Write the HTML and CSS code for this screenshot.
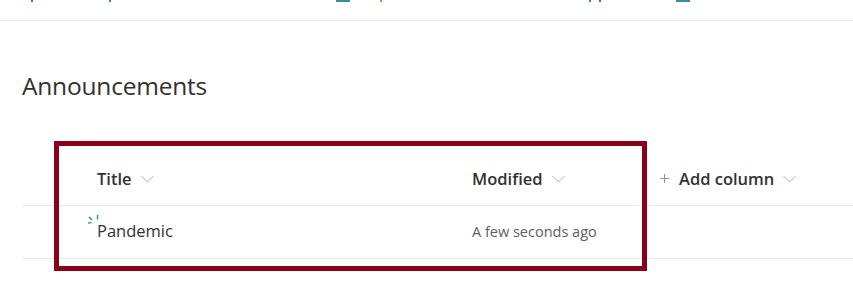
FILE: index.html
```html
<!DOCTYPE html>
<html>
<head>
  <meta charset="utf-8">
  <meta name="viewport" content="width=device-width, initial-scale=1">
  <title>Announcements</title>
  <link rel="stylesheet" href="styles.css">
</head>
<body>
  <div class="topbar">
    <div class="crumbs">
      <span class="mk m1"></span>
      <span class="mk m2"></span>
      <span class="mk bar m3"></span>
      <span class="mk m4"></span>
      <span class="mk m5"></span>
      <span class="mk m6"></span>
      <span class="mk bar m7"></span>
    </div>
  </div>

  <main class="page">
    <h1>Announcements</h1>

    <div class="list">
      <div class="row head">
        <div class="cell title">Title <svg class="chev" viewBox="0 0 14 8"><polyline points="1,1 7,7 13,1"/></svg></div>
        <div class="cell modified">Modified <svg class="chev" viewBox="0 0 14 8"><polyline points="1,1 7,7 13,1"/></svg></div>
        <div class="cell add">
          <svg class="plus" viewBox="0 0 10 10"><path d="M5 0V10M0 5H10"/></svg>
          Add column <svg class="chev" viewBox="0 0 14 8"><polyline points="1,1 7,7 13,1"/></svg>
        </div>
      </div>
      <div class="row item">
        <div class="cell title">
          <svg class="new" viewBox="0 0 11 11"><path d="M1 2L4 5M9.5 0V4.5M0 7.8H3.5"/></svg>
          Pandemic
        </div>
        <div class="cell modified">A few seconds ago</div>
      </div>
    </div>

    <div class="highlight"></div>
  </main>
</body>
</html>
```

FILE: styles.css
```css
body {
  margin: 0;
  background: #fff;
  color: #323130;
  font-family: 'Open Sans', 'Noto Sans', sans-serif;
}

.topbar {
  height: 20px;
  border-bottom: 1px solid #edebe9;
}

.crumbs {
  display: flex;
  height: 2px;
}

.mk {
  width: 2px;
  height: 2px;
  background: #2b88b8;
}

.mk.bar {
  width: 14px;
  background: #3b8c9c;
}

.m1 { margin-left: 31px; }
.m2 { margin-left: 76px; }
.m3 { margin-left: 225px; }
.m4 { margin-left: 30px; background: #d08a30; }
.m5 { margin-left: 207px; }
.m6 { margin-left: 8px; }
.m7 { margin-left: 75px; width: 7px; }

.page {
  position: relative;
  padding: 49px 0 27px 22px;
}

h1 {
  margin: 0;
  font-size: 24.5px;
  font-weight: 400;
  line-height: 32px;
  letter-spacing: -0.2px;
}

.list {
  margin-top: 50px;
}

.row {
  display: flex;
  align-items: center;
  border-bottom: 1px solid #edebe9;
}

.row.head {
  height: 53px;
  font-size: 16.5px;
  font-weight: 600;
}

.row.item {
  height: 52px;
}

.cell {
  display: flex;
  align-items: center;
}

.cell.title {
  position: relative;
  width: 375px;
  padding-left: 75px;
}

.cell.modified {
  width: 188px;
}

.item .title {
  font-size: 16.5px;
  line-height: 24px;
  margin-top: -3px;
}

.item .modified {
  font-size: 14.5px;
  color: #605e5c;
  margin-top: -2px;
}

.chev {
  width: 15px;
  height: 8px;
  margin-left: 8px;
  fill: none;
  stroke: #b3b0ad;
  stroke-width: 1;
}

.plus {
  width: 9px;
  height: 9px;
  margin-right: 10px;
  stroke: #8a8886;
  stroke-width: 1;
}

.new {
  position: absolute;
  left: 66px;
  top: -4px;
  width: 11px;
  height: 11px;
  fill: none;
  stroke: #23869b;
  stroke-width: 1.3;
}

.highlight {
  position: absolute;
  left: 54px;
  top: 120px;
  width: 583px;
  height: 120px;
  border: 5px solid #8a0019;
  pointer-events: none;
}
```
